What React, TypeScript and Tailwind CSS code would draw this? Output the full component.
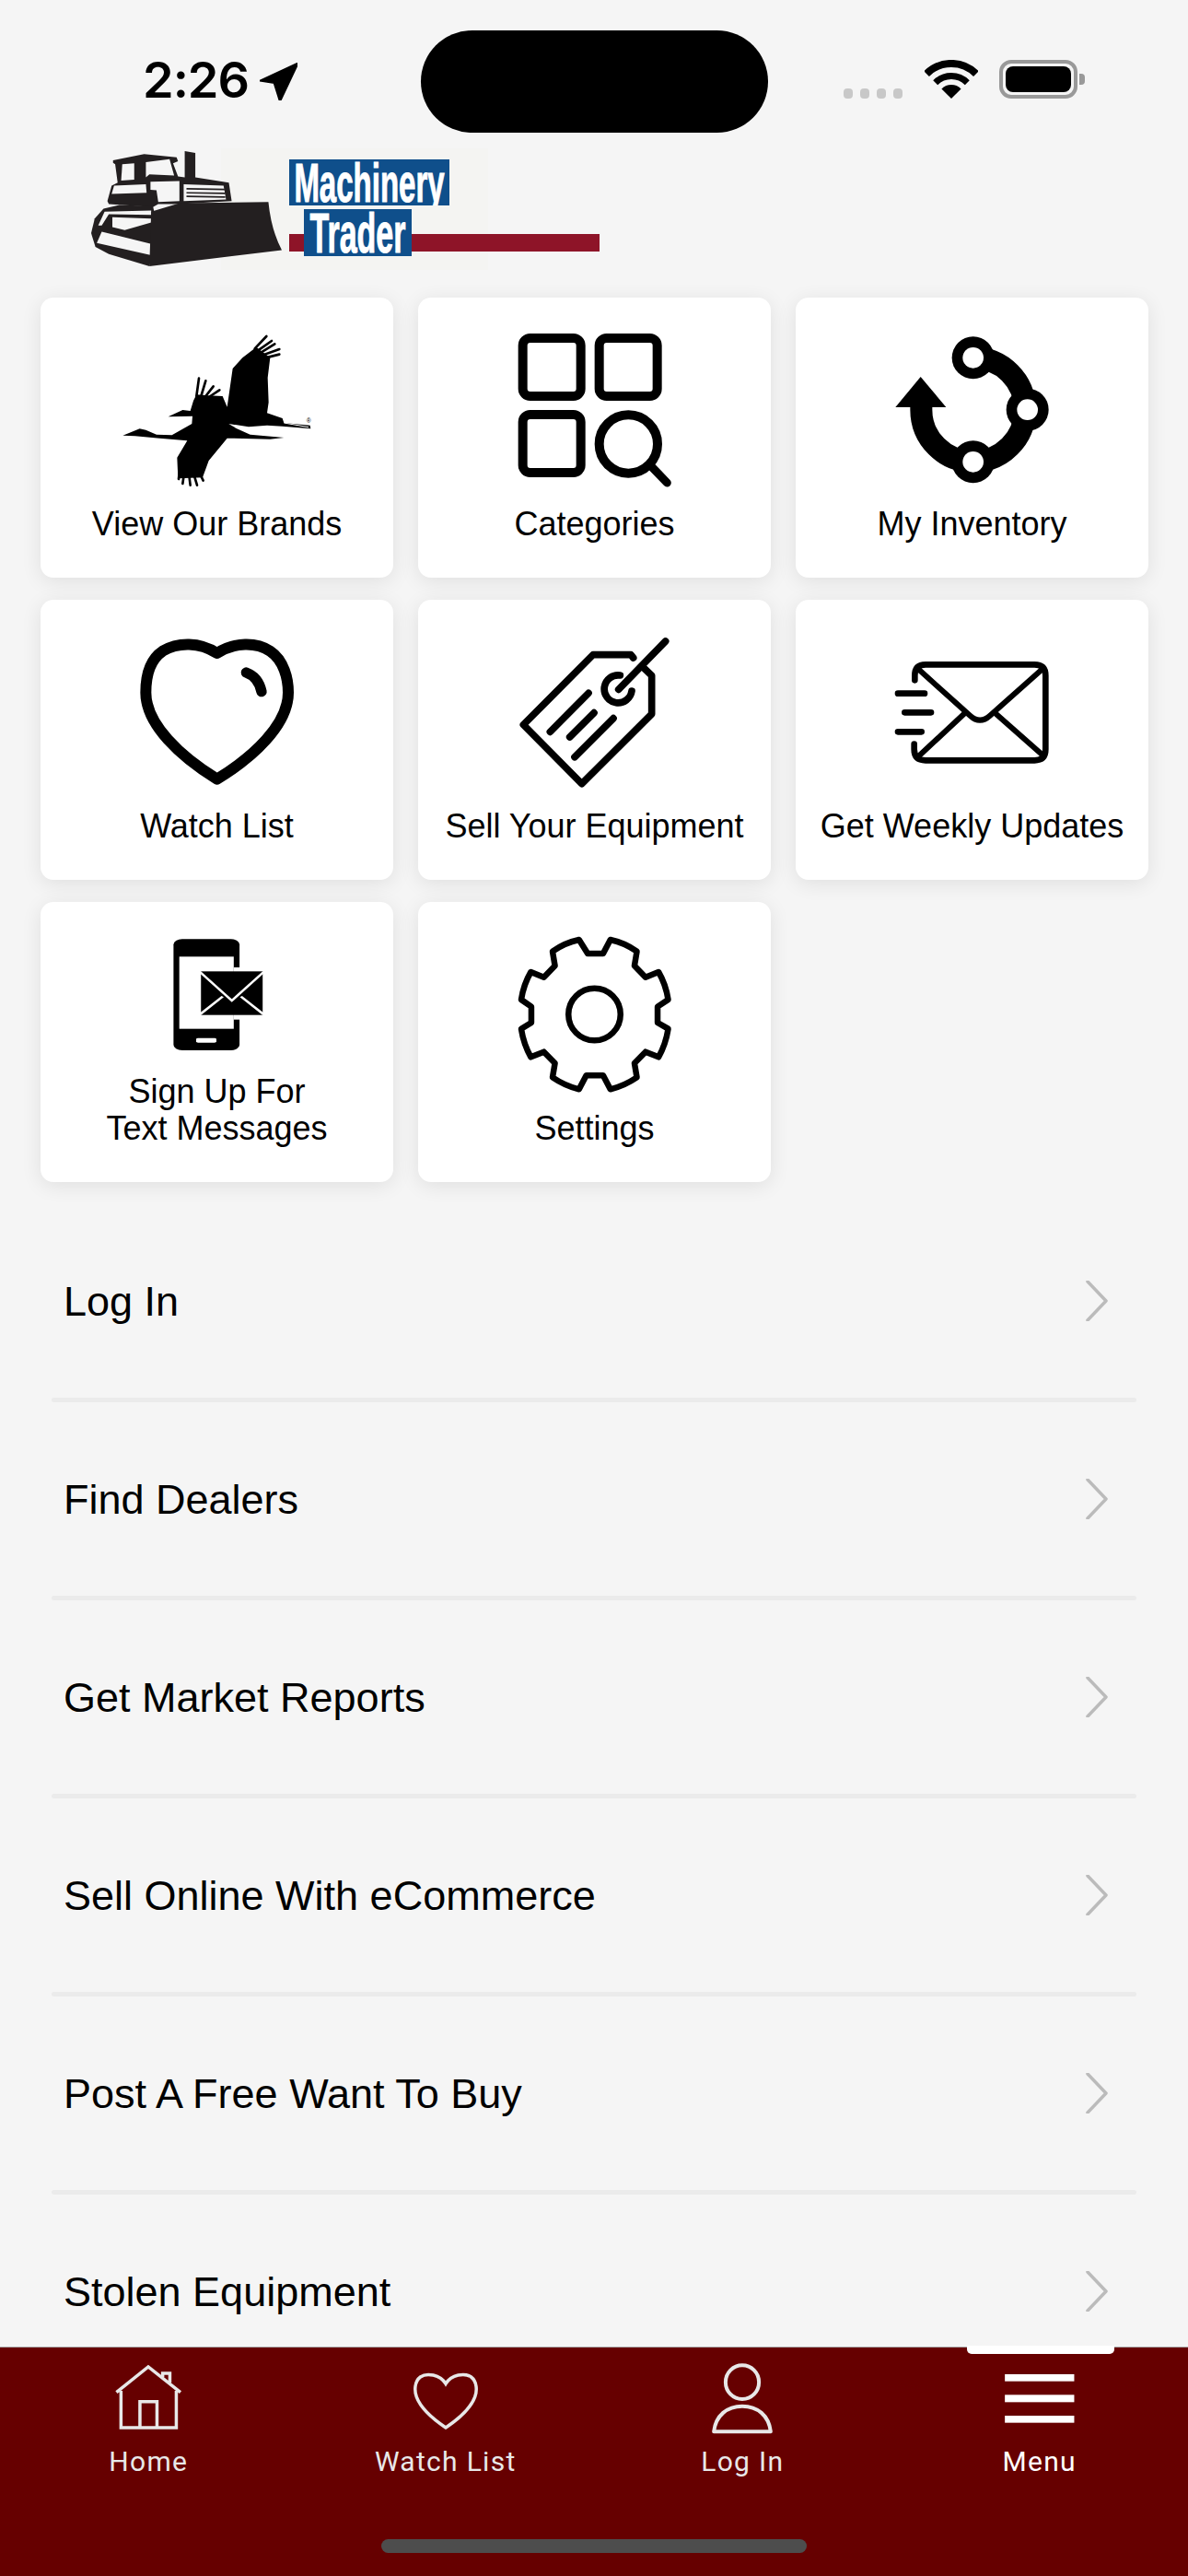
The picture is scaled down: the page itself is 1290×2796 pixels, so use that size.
const STROKE = { fill: "none", stroke: "#000", strokeLinecap: "round", strokeLinejoin: "round" } as const;

function CraneIcon() {
  return (
    <svg viewBox="42 39 1149 669" className="w-full h-[223px]">
      <path
        d="M310 488L365 466L385 470L420 485L470 487L535 450L537 425L458 427L505 405L530 408L540 375L550 355L590 358L635 360L650 395L668 270L700 235L745 200L790 235L782 300L785 380L780 415L830 432L835 447L920 455L922 466L830 458L780 455L720 460L655 450L680 465L725 485L835 495L790 500L650 497L590 570L570 625L490 628L487 560L520 505L430 497L350 490Z"
        fill="#000"
      />
      <g {...STROKE} strokeWidth="8">
        <path d="M740 205L778 165M755 208L795 180M765 215L805 190M770 225L820 207M775 235L820 224" />
        <path d="M550 360L558 302M565 360L580 310M580 360L605 328M595 360L625 340" />
        <path d="M495 600L492 630M510 610L505 645M525 610L530 650M540 610L552 650M555 600L572 635" />
      </g>
      <path d="M835 447L915 461" stroke="#fff" strokeWidth="3" fill="none" />
      <text x="908" y="446" fontSize="20" fontFamily="Liberation Sans, sans-serif" fill="#000">®</text>
    </svg>
  );
}

function CategoriesIcon() {
  return (
    <svg viewBox="42 39 1149 669" className="w-full h-[223px]">
      <g {...STROKE} strokeWidth="30">
        <rect x="383" y="171" width="189" height="189" rx="24" />
        <rect x="632" y="171" width="189" height="189" rx="24" />
        <rect x="383" y="420" width="189" height="189" rx="24" />
        <circle cx="727" cy="516" r="95" />
      </g>
      <path d="M805 592L853 642" {...STROKE} strokeWidth="27" />
    </svg>
  );
}

function InventoryIcon() {
  return (
    <svg viewBox="42 39 1149 669" className="w-full h-[223px]">
      <path d="M620 235A169 169 0 1 1 451 404L451 390" fill="none" stroke="#000" strokeWidth="72" />
      <path d="M367 396L449 297L532 396Z" fill="#000" />
      <circle cx="620" cy="235" r="69" fill="#000" />
      <circle cx="797" cy="404" r="69" fill="#000" />
      <circle cx="620" cy="574" r="69" fill="#000" />
      <circle cx="620" cy="235" r="34" fill="#fff" />
      <circle cx="797" cy="404" r="34" fill="#fff" />
      <circle cx="620" cy="574" r="34" fill="#fff" />
    </svg>
  );
}

function HeartIcon() {
  return (
    <svg viewBox="42 33 1149 669" className="w-full h-[223px]">
      <path
        d="M617 207C560 170 490 170 440 200C395 230 385 290 385 335C385 440 500 545 617 617C735 545 849 440 849 335C849 290 835 230 790 200C745 170 675 170 617 207Z"
        {...STROKE}
        strokeWidth="36"
      />
      <path d="M712 270C740 280 755 300 762 332" {...STROKE} strokeWidth="34" />
    </svg>
  );
}

function TagIcon() {
  return (
    <svg viewBox="42 33 1149 669" className="w-full h-[223px]">
      <g {...STROKE} strokeWidth="23">
        <path d="M743 222L735 212L612 212L385 440L575 632L803 405L803 280L775 253" />
        <path d="M700 279A45 45 0 1 0 738 330" />
        <path d="M695 325L848 168" />
        <path d="M472 463L597 337M536 480L615 401M552 545L678 419" />
      </g>
    </svg>
  );
}

function MailIcon() {
  return (
    <svg viewBox="42 33 1149 669" className="w-full h-[223px]">
      <g {...STROKE} strokeWidth="20">
        <path d="M430 295L430 280Q430 244 465 244L820 244Q856 244 856 280L856 520Q856 556 820 556L465 556Q428 556 428 520L428 503" />
        <path d="M375 338L462 338M397 400L483 400M375 463L452 463" />
      </g>
      <g {...STROKE} strokeWidth="18">
        <path d="M445 262L610 410Q642 440 675 410L842 262" />
        <path d="M445 540L590 405M695 405L842 535" />
      </g>
    </svg>
  );
}

function PhoneMailIcon() {
  return (
    <svg viewBox="27 27 732 549" preserveAspectRatio="none" className="w-full h-[183px]">
      <rect x="303" y="148" width="137" height="362" rx="18" fill="#000" />
      <rect x="315" y="205" width="113" height="235" fill="#fff" />
      <rect x="428" y="240" width="14" height="170" fill="#fff" />
      <rect x="350" y="470" width="42" height="15" rx="4" fill="#fff" />
      <rect x="360" y="253" width="128" height="142" fill="#000" />
      <path d="M358 255L424 348L490 255M358 393L405 335M490 393L443 335" fill="none" stroke="#fff" strokeWidth="6" />
    </svg>
  );
}

function GearIcon() {
  return (
    <svg viewBox="811 27 732 669" preserveAspectRatio="none" className="w-full h-[223px]">
      <g fill="none" stroke="#000" strokeWidth="6.5" strokeLinejoin="round">
        <path
          d="M1145 150L1163 195L1195 195L1210 150Q1240 160 1265 188L1260 235L1283 272L1310 255Q1325 295 1330 345L1308 368L1308 420L1330 440Q1325 490 1310 532L1283 515L1260 552L1265 598Q1240 625 1210 637L1195 592L1160 592L1145 637Q1115 625 1090 598L1095 552L1072 515L1045 532Q1030 490 1025 440L1046 420L1046 368L1025 345Q1030 295 1045 255L1072 272L1095 235L1090 188Q1115 160 1145 150Z"
          vectorEffect="non-scaling-stroke"
        />
        <ellipse cx="1177" cy="393" rx="54" ry="85" vectorEffect="non-scaling-stroke" />
      </g>
    </svg>
  );
}

function Bulldozer() {
  return (
    <svg viewBox="50 42 540 376" preserveAspectRatio="none" className="w-[207px] h-[125px] mt-[4px] shrink-0">
      {/* cab and engine */}
      <path
        d="M112 72L200 52L292 62L296 75L282 82L296 125L315 128L315 42L345 48L345 128L440 145L448 205L300 215L240 215L225 225L100 215L96 205L108 155L125 145L118 85L112 80Z"
        fill="#231f20"
      />
      <path d="M138 85L172 82L172 135L135 138Z" fill="#f5f5f5" />
      <path d="M205 78L272 68L285 122L215 118L205 128Z" fill="#f5f5f5" />
      <path d="M115 155L205 150L207 178L108 182Z" fill="#f5f5f5" />
      <path d="M218 142L300 140L300 205L240 208L235 170L218 168Z" fill="#f5f5f5" />
      <path d="M312 150L425 155L432 200L312 205Z" fill="#f5f5f5" />
      <path d="M320 165L428 167M320 178L430 180M320 190L430 192" stroke="#231f20" strokeWidth="5" fill="none" />
      {/* tracks */}
      <path d="M225 222L130 218L85 230L60 262L50 310L62 355L100 378L215 418L240 300Z" fill="#231f20" />
      <path d="M110 258L220 262L220 275L145 300L110 290Z" fill="#f5f5f5" />
      <path d="M88 240L220 236L220 250L100 248L80 285L70 285Z" fill="#f5f5f5" />
      <path d="M66 342L220 382L220 345L80 305Z" fill="#f5f5f5" />
      {/* blade */}
      <path d="M300 212L552 208Q560 300 590 365L215 418L220 240Z" fill="#231f20" />
    </svg>
  );
}

function Logo() {
  return (
    <div className="relative flex h-[163px] ml-[99px]">
      <div className="absolute left-[141px] top-[1px] w-[290px] h-[132px] bg-[#f4f4f2]" />
      <div className="relative z-10 flex">
        <Bulldozer />
        <div className="relative ml-[8px] w-[337px] font-['Liberation_Sans',sans-serif] font-bold text-white">
          <div className="absolute left-0 top-[94px] w-[337px] h-[19px] bg-[#8e1428]" />
          <div className="relative mt-[13px] flex h-[50px] w-[174px] items-center justify-center overflow-hidden bg-[#0f4f8b]">
            <span className="inline-block scale-y-[1.8] whitespace-nowrap text-[33px] leading-[27px] [-webkit-text-stroke:0.6px_white]">Machinery</span>
          </div>
          <div className="relative ml-[16px] mt-[4px] flex h-[51px] w-[117px] items-center justify-center overflow-hidden bg-[#0f4f8b]">
            <span className="inline-block scale-y-[1.77] whitespace-nowrap text-[34px] leading-[28px] [-webkit-text-stroke:0.6px_white]">Trader</span>
          </div>
        </div>
      </div>
    </div>
  );
}

function StatusBar() {
  return (
    <div className="flex h-[160px] items-start shrink-0">
      <span className="ml-[155px] mt-[57px] w-[115px] text-[54px] leading-[60px] font-semibold text-black font-['Inter',sans-serif] tracking-[-1px] whitespace-nowrap">
        2:26
      </span>
      <svg viewBox="343 203 50 123" preserveAspectRatio="none" className="ml-[12px] mt-[68px] h-[41px] w-[41px]">
        <path d="M393 205L343 262L363 270L370 325Z" fill="#000" stroke="#000" strokeWidth="4" strokeLinejoin="round" />
      </svg>
      <div className="ml-[134px] mt-[33px] h-[111px] w-[377px] rounded-full bg-black" />
      <div className="ml-[82px] mt-[96px] flex gap-[8px]">
        <div className="h-[11px] w-[10px] rounded-[4px] bg-[#c8c8c8]" />
        <div className="h-[11px] w-[10px] rounded-[4px] bg-[#c8c8c8]" />
        <div className="h-[11px] w-[10px] rounded-[4px] bg-[#c8c8c8]" />
        <div className="h-[11px] w-[10px] rounded-[4px] bg-[#c8c8c8]" />
      </div>
      <svg viewBox="0 0 58 42" className="ml-[24px] mt-[65px] h-[42px] w-[58px]">
        <path d="M29 42L18.4 31.4A15 15 0 0 1 39.6 31.4Z" fill="#000" />
        <path d="M11.7 24.7A24.5 24.5 0 0 1 46.3 24.7" fill="none" stroke="#000" strokeWidth="7" />
        <path d="M2.1 15.1A38 38 0 0 1 55.9 15.1" fill="none" stroke="#000" strokeWidth="8" />
      </svg>
      <div className="ml-[23px] mt-[65px] flex items-center">
        <div className="h-[42px] w-[85px] rounded-[13px] border-[4px] border-[#999] p-[3px]">
          <div className="h-full w-full rounded-[8px] bg-black" />
        </div>
        <div className="ml-[2px] h-[12px] w-[6px] rounded-r-[4px] bg-[#999]" />
      </div>
    </div>
  );
}

function Card({ label, icon }: { label: React.ReactNode; icon: React.ReactNode }) {
  return (
    <div className="flex h-[304px] flex-col items-center rounded-[14px] bg-white shadow-[0_4px_22px_rgba(0,0,0,0.09)]">
      {icon}
      <div className="pt-[3px] text-center text-[36px] leading-[40px] text-black whitespace-nowrap">{label}</div>
    </div>
  );
}

const MENU_ROWS = [
  "Log In",
  "Find Dealers",
  "Get Market Reports",
  "Sell Online With eCommerce",
  "Post A Free Want To Buy",
  "Stolen Equipment",
];

function MenuRow({ label }: { label: string }) {
  return (
    <div>
      <div className="flex h-[210px] items-center justify-between pl-[13px] pr-[31px]">
        <span className="pt-[2px] text-[45px] leading-[50px] text-black">{label}</span>
        <svg viewBox="0 0 24 44" className="h-[44px] w-[24px]">
          <path d="M2 1L22 22L2 43" fill="none" stroke="#bbb" strokeWidth="3.5" strokeLinecap="round" strokeLinejoin="round" />
        </svg>
      </div>
      <div className="h-[5px] rounded-full bg-[#ebebeb]" />
    </div>
  );
}

function TabItem({ label, viewBox, active, children }: { label: string; viewBox: string; active?: boolean; children: React.ReactNode }) {
  return (
    <div className={active ? "flex flex-col items-center text-white" : "flex flex-col items-center text-[#e8e8e8]"}>
      <svg viewBox={viewBox} preserveAspectRatio="none" className="h-[96px] w-[100px]">
        {children}
      </svg>
      <span className="mt-[6px] font-['Roboto',sans-serif] text-[30px] leading-[40px] tracking-[1.3px] whitespace-nowrap">{label}</span>
    </div>
  );
}

const TAB_STROKE = { fill: "none", stroke: "currentColor", strokeWidth: 3.5, vectorEffect: "non-scaling-stroke" } as const;

function TabBar() {
  return (
    <div className="relative h-[249px] shrink-0 border-t border-[#aaa] bg-[#660000]">
      <div className="absolute right-[80px] -top-[2px] h-[9px] w-[160px] rounded-b-[5px] bg-white" />
      <div className="grid grid-cols-4 pt-[2px]">
        <TabItem label="Home" viewBox="270.5 150 243 288">
          <path d="M308 290L392 207L477 290M320 285L320 405L466 405L466 285M370 405L370 320L415 320L415 405M430 240L430 228L449 228L449 258" {...TAB_STROKE} />
        </TabItem>
        <TabItem label="Watch List" viewBox="1053.5 150 243 288">
          <path d="M1175 262C1160 232 1125 225 1108 240C1092 255 1092 285 1098 305C1110 345 1145 380 1175 405C1205 380 1240 345 1252 305C1258 285 1258 255 1242 240C1225 225 1190 232 1175 262Z" {...TAB_STROKE} />
        </TabItem>
        <TabItem label="Log In" viewBox="268.5 150 243 288">
          <ellipse cx="390" cy="257" rx="44" ry="55" {...TAB_STROKE} strokeWidth={4} />
          <path d="M315 418C320 365 350 335 390 335C430 335 460 365 465 418Z" {...TAB_STROKE} strokeWidth={4} strokeLinejoin="round" />
        </TabItem>
        <TabItem label="Menu" viewBox="1054.5 150 243 288" active>
          <rect x="1084" y="231" width="183" height="23" fill="currentColor" />
          <rect x="1084" y="298" width="183" height="24" fill="currentColor" />
          <rect x="1084" y="366" width="183" height="23" fill="currentColor" />
        </TabItem>
      </div>
      <div className="mx-auto mt-[64px] h-[15px] w-[462px] rounded-full bg-[#4d4d4d]" />
    </div>
  );
}

export default function App() {
  return (
    <div className="flex h-[2796px] w-[1290px] flex-col overflow-hidden bg-[#f5f5f5] font-['Liberation_Sans',Arial,sans-serif]">
      <div className="flex-1 overflow-hidden">
        <StatusBar />
        <Logo />
        <div className="ml-[44px] grid grid-cols-[repeat(3,383px)] gap-x-[27px] gap-y-[24px]">
          <Card label="View Our Brands" icon={<CraneIcon />} />
          <Card label="Categories" icon={<CategoriesIcon />} />
          <Card label="My Inventory" icon={<InventoryIcon />} />
          <Card label="Watch List" icon={<HeartIcon />} />
          <Card label="Sell Your Equipment" icon={<TagIcon />} />
          <Card label="Get Weekly Updates" icon={<MailIcon />} />
          <Card
            label={
              <>
                Sign Up For
                <br />
                Text Messages
              </>
            }
            icon={<PhoneMailIcon />}
          />
          <Card label="Settings" icon={<GearIcon />} />
        </div>
        <div className="mx-[56px] mt-[24px]">
          {MENU_ROWS.map((row) => (
            <MenuRow key={row} label={row} />
          ))}
        </div>
      </div>
      <TabBar />
    </div>
  );
}
